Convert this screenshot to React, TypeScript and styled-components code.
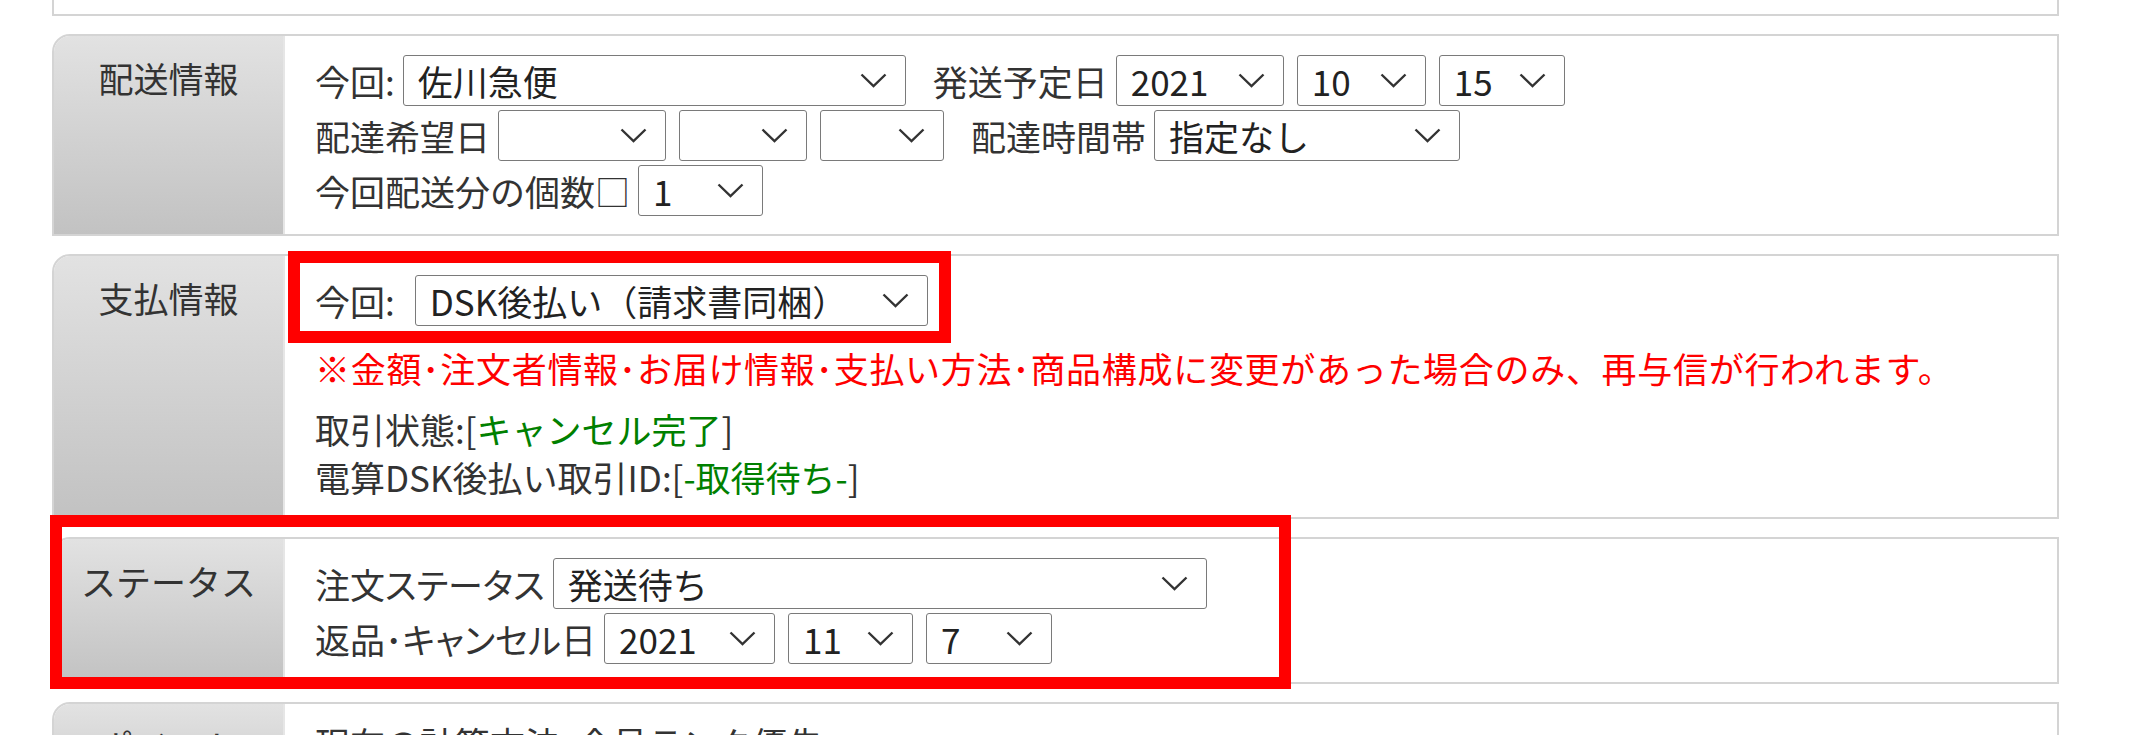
import { FC, ReactNode } from 'react';
import styled, { createGlobalStyle } from 'styled-components';

const GlobalStyle = createGlobalStyle`
  html, body {
    margin: 0;
    padding: 0;
    background: #fff;
  }

  body {
    width: 2145px;
    height: 735px;
    overflow: hidden;
    font-family: 'Noto Sans CJK JP', 'Noto Sans', sans-serif;
    color: #333;
  }
`;

const Page = styled.main`
  display: flex;
  flex-direction: column;
  row-gap: 18px;
  width: 2007px;
  margin-left: 52px;
`;

const TopStub = styled.div`
  height: 14px;
  border: 2px solid #d4d4d4;
  border-top: none;
`;

const Section = styled.section`
  position: relative;
  display: flex;
  border: 2px solid #d4d4d4;
  border-top-left-radius: 18px;
  background: #fff;
`;

const Heading = styled.div`
  flex: 0 0 231px;
  box-sizing: border-box;
  padding-top: 20px;
  background: linear-gradient(#e2e2e2, #c2c2c2);
  border-right: 2px solid #e6e6e6;
  border-top-left-radius: 16px;
  text-align: center;
  font-size: 35px;
  line-height: 44px;
  color: #333;
`;

const Body = styled.div`
  flex: 1;
  display: flex;
  flex-direction: column;
  padding: 17px 0 16px 30px;
  font-size: 35px;
  color: #333;
`;

const Line = styled.div`
  position: relative;
  display: flex;
  align-items: center;
  height: 55px;
`;

const Caption = styled.span<{ $lead?: boolean; $wide?: boolean; $narrow?: boolean }>`
  margin-left: ${(p) => (p.$lead ? '14px' : '0')};
  margin-right: ${(p) => (p.$wide ? '20px' : '8px')};
  font-feature-settings: ${(p) => (p.$narrow ? "'palt'" : 'normal')};
  white-space: nowrap;
`;

const SelectBox = styled.div<{ $w: number }>`
  display: flex;
  align-items: center;
  justify-content: space-between;
  box-sizing: border-box;
  width: ${(p) => p.$w}px;
  height: 51px;
  margin-right: 13px;
  padding: 0 18px 0 14px;
  border: 1.5px solid #7a7a7a;
  border-radius: 3px;
  background: #fff;
  color: #222;
  white-space: nowrap;
`;

const Notice = styled.p`
  margin: 16px 0 13px;
  line-height: 48px;
  letter-spacing: 0.7px;
  color: #ff0000;
  white-space: nowrap;
`;

const InfoLine = styled.div`
  line-height: 48px;
  white-space: nowrap;
`;

const Green = styled.span`
  color: #008000;
`;

const TextLine = styled.div`
  line-height: 44px;
  white-space: nowrap;
`;

const Marker = styled.div`
  position: absolute;
  box-sizing: border-box;
  border: 12px solid #ff0000;
  pointer-events: none;
`;

const RowMarker = styled(Marker)`
  left: -27px;
  top: -22px;
  width: 663px;
  height: 92px;
`;

const SectionMarker = styled(Marker)`
  left: -4px;
  top: -24px;
  width: 1241px;
  height: 174px;
`;

const Chevron: FC = () => (
  <svg width='27' height='15' viewBox='0 0 27 15'>
    <path d='M1.5 1.5 L13.5 13 L25.5 1.5' fill='none' stroke='#333' strokeWidth='2.4' />
  </svg>
);

const Select: FC<{ w: number; value?: string }> = ({ w, value }) => (
  <SelectBox $w={w}>
    <span>{value}</span>
    <Chevron />
  </SelectBox>
);

const Block: FC<{ title: string; children: ReactNode; marker?: boolean }> = ({ title, children, marker }) => (
  <Section>
    <Heading>{title}</Heading>
    <Body>{children}</Body>
    {marker && <SectionMarker />}
  </Section>
);

export default function App() {
  return (
    <>
      <GlobalStyle />
      <Page>
        <TopStub />

        <Block title='配送情報'>
          <Line>
            <Caption>今回:</Caption>
            <Select w={503} value='佐川急便' />
            <Caption $lead>発送予定日</Caption>
            <Select w={168} value='2021' />
            <Select w={129} value='10' />
            <Select w={126} value='15' />
          </Line>
          <Line>
            <Caption>配達希望日</Caption>
            <Select w={168} />
            <Select w={128} />
            <Select w={124} />
            <Caption $lead>配達時間帯</Caption>
            <Select w={306} value='指定なし' />
          </Line>
          <Line>
            <Caption>今回配送分の個数□</Caption>
            <Select w={125} value='1' />
          </Line>
        </Block>

        <Block title='支払情報'>
          <Line>
            <Caption $wide>今回:</Caption>
            <Select w={513} value='DSK後払い（請求書同梱）' />
            <RowMarker />
          </Line>
          <Notice>
            ※金額･注文者情報･お届け情報･支払い方法･商品構成に変更があった場合のみ、再与信が行われます。
          </Notice>
          <InfoLine>
            取引状態:[<Green>キャンセル完了</Green>]
          </InfoLine>
          <InfoLine>
            電算DSK後払い取引ID:[<Green>-取得待ち-</Green>]
          </InfoLine>
        </Block>

        <Block title='ステータス' marker>
          <Line>
            <Caption $narrow>注文ステータス</Caption>
            <Select w={654} value='発送待ち' />
          </Line>
          <Line>
            <Caption $narrow>返品･キャンセル日</Caption>
            <Select w={171} value='2021' />
            <Select w={125} value='11' />
            <Select w={126} value='7' />
          </Line>
        </Block>

        <Block title='ポイント'>
          <TextLine>現在の計算方法: 会員ランク優先</TextLine>
          <TextLine>&nbsp;</TextLine>
        </Block>
      </Page>
    </>
  );
}
